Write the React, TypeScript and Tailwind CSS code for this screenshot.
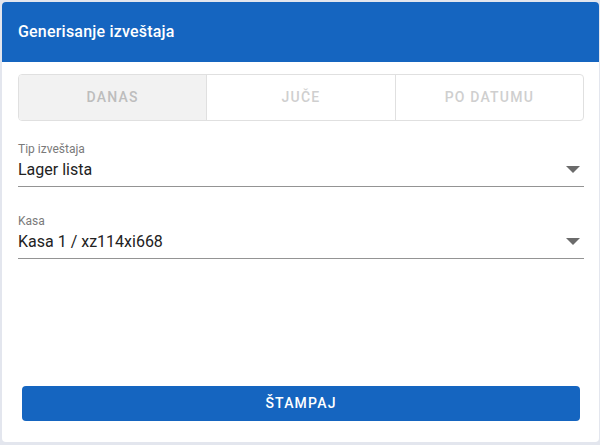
import React from "react";

function Arrow() {
  return (
    <svg width="16" height="8" viewBox="0 0 16 8" className="shrink-0">
      <polygon points="1,0 15,0 8,7" fill="#6b6b6b" />
    </svg>
  );
}

function SelectField({ label, value }: { label: string; value: string }) {
  return (
    <div className="flex flex-col">
      <div className="text-[12px] leading-[14px] text-[#7a7a7a]">{label}</div>
      <div className="flex items-center justify-between h-[31px] border-b border-[#949494] pb-[2px]">
        <span className="text-[16px] text-[#222]">{value}</span>
        <span className="mr-[3px]">
          <Arrow />
        </span>
      </div>
    </div>
  );
}

export default function App() {
  return (
    <div
      className="w-[600px] h-[445px] bg-[#e3e6ee] pt-[2px] pl-[2px] pr-[1px]"
      style={{ fontFamily: "Roboto, 'Noto Sans', sans-serif" }}
    >
      <div className="h-[440px] bg-white rounded-[4px] overflow-hidden flex flex-col">
        <div className="h-[60px] bg-[#1565c0] flex items-center px-4">
          <span className="text-white text-[16px] font-medium tracking-[0.2px]">Generisanje izveštaja</span>
        </div>
        <div className="flex-1 flex flex-col pl-4 pr-[15px] pt-[12px]">
          <div className="flex h-[47px] border border-[#e0e0e0] rounded-[4px] overflow-hidden">
            <div className="flex-1 flex items-center justify-center bg-[#f2f2f2] text-[#bdbdbd] text-[14px] font-medium tracking-[1.2px]">
              DANAS
            </div>
            <div className="flex-1 flex items-center justify-center border-l border-[#e0e0e0] text-[#cfcfcf] text-[14px] font-medium tracking-[1.2px]">
              JUČE
            </div>
            <div className="flex-1 flex items-center justify-center border-l border-[#e0e0e0] text-[#cfcfcf] text-[14px] font-medium tracking-[1.2px]">
              PO DATUMU
            </div>
          </div>
          <div className="mt-[21px]">
            <SelectField label="Tip izveštaja" value="Lager lista" />
          </div>
          <div className="mt-[27px]">
            <SelectField label="Kasa" value="Kasa 1 / xz114xi668" />
          </div>
          <div className="flex-1" />
          <div className="px-1 mb-[21px]">
            <button className="w-full h-[35px] rounded-[4px] bg-[#1565c0] text-white text-[14px] font-medium tracking-[1.2px]">
              ŠTAMPAJ
            </button>
          </div>
        </div>
      </div>
    </div>
  );
}
